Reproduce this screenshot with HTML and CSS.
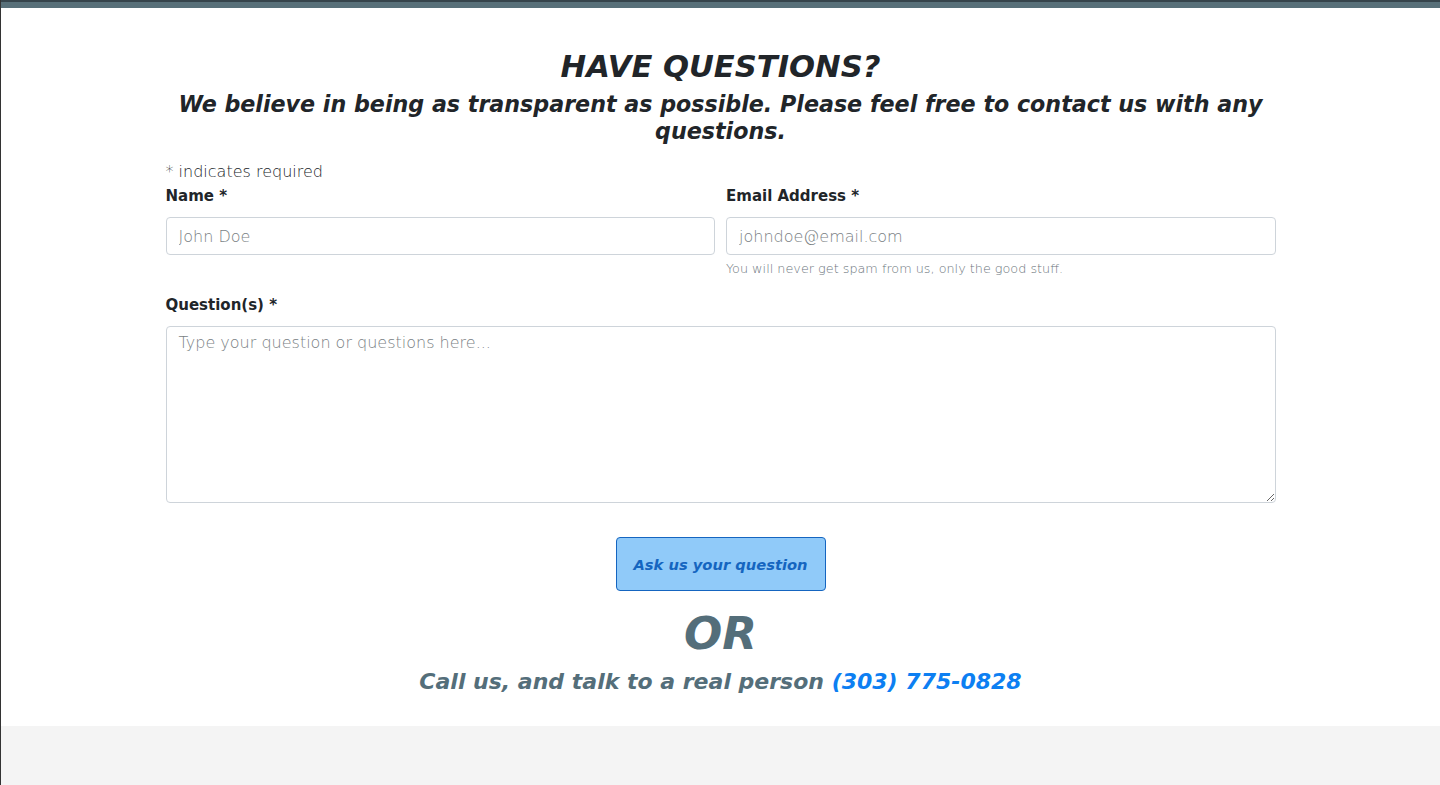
FILE: index.html
```html
<!DOCTYPE html>
<html lang="en">
<head>
<meta charset="utf-8">
<title>Have Questions?</title>
<link rel="stylesheet" href="styles.css">
</head>
<body>
<div class="topbar"></div>
<main class="section">
  <div class="container">
    <h2 class="title">HAVE QUESTIONS?</h2>
    <h4 class="subtitle">We believe in being as transparent as possible. Please feel free to contact us with any questions.</h4>
    <form class="form">
      <div class="required-note">* indicates required</div>
      <div class="row">
        <div class="field">
          <label class="label" for="name">Name *</label>
          <input class="input" id="name" type="text" placeholder="John Doe">
        </div>
        <div class="field">
          <label class="label" for="email">Email Address *</label>
          <input class="input" id="email" type="email" placeholder="johndoe@email.com">
          <small class="help">You will never get spam from us, only the good stuff.</small>
        </div>
      </div>
      <div class="field full">
        <label class="label" for="q">Question(s) *</label>
        <textarea class="input textarea" id="q" placeholder="Type your question or questions here..."></textarea>
      </div>
      <div class="actions">
        <button class="btn" type="button">Ask us your question</button>
      </div>
    </form>
    <div class="or">OR</div>
    <div class="call">Call us, and talk to a real person <a class="phone" href="#">(303) 775-0828</a></div>
  </div>
</main>
<footer class="footer"></footer>
</body>
</html>
```
FILE: styles.css
```css
* { box-sizing: border-box; }
html, body { margin: 0; padding: 0; }
body {
  font-family: "DejaVu Sans", sans-serif;
  color: #212529;
  background: #f4f4f4;
  border-left: 1px solid #333;
  min-height: 785px;
}
.topbar {
  height: 8px;
  background: #587079;
  border-top: 2px solid #36444b;
}
.section {
  background: #fff;
  padding: 40px 0 30px;
}
.container {
  width: 1110px;
  margin: 0 auto;
}
.title {
  margin: 0;
  text-align: center;
  font-size: 30.6px;
  font-weight: 700;
  font-style: italic;
  line-height: 37px;
  color: #212529;
}
.subtitle {
  margin: 6px 0 15px;
  text-align: center;
  font-size: 22.2px;
  font-weight: 700;
  font-style: italic;
  line-height: 27px;
  color: #212529;
}
.required-note {
  font-size: 16px;
  font-weight: 300;
  line-height: 24px;
}
.row {
  display: grid;
  grid-template-columns: 1fr 1fr;
  column-gap: 11px;
}
.field { display: flex; flex-direction: column; margin-bottom: 15px; }
.label {
  font-size: 15px;
  font-weight: 700;
  line-height: 24px;
  margin-bottom: 9px;
}
.input {
  height: 38px;
  border: 1px solid #ced4da;
  border-radius: 4px;
  padding: 6px 12px;
  font-family: inherit;
  font-size: 16px;
  color: #495057;
  background: #fff;
}
.input::placeholder { color: #7a7f84; font-weight: 300; }
.help {
  margin-top: 4px;
  font-size: 12.8px;
  line-height: 19px;
  color: #6c757d;
  font-weight: 300;
}
.textarea {
  height: 177px;
  resize: vertical;
}
.actions {
  display: flex;
  justify-content: center;
  padding-top: 19px;
}
.btn {
  width: 210px;
  height: 54px;
  background: #90caf9;
  border: 1px solid #1565c0;
  border-radius: 4px;
  color: #1565c0;
  font-family: inherit;
  font-size: 14.7px;
  font-weight: 700;
  font-style: italic;
}
.or {
  text-align: center;
  font-size: 45px;
  font-weight: 700;
  font-style: italic;
  color: #546e7a;
  line-height: 50px;
  margin-top: 18px;
}
.call {
  text-align: center;
  font-size: 22px;
  font-weight: 700;
  font-style: italic;
  color: #546e7a;
  line-height: 29px;
  margin-top: 8px;
}
.phone { color: #0d7ff2; text-decoration: none; }
```
